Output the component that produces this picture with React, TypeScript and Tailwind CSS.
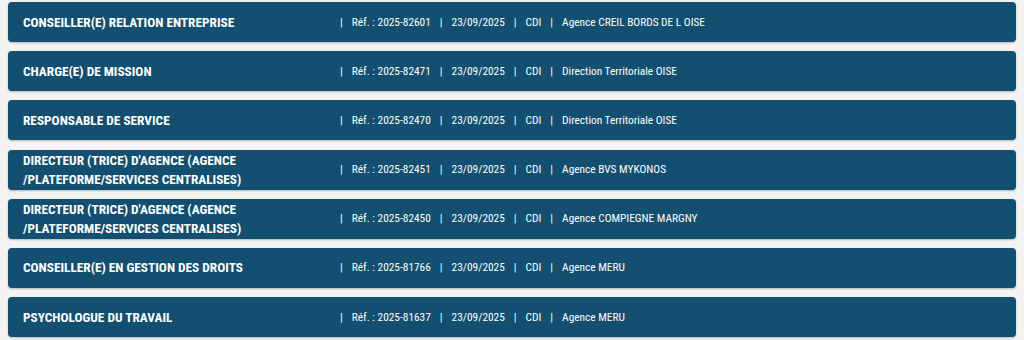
const offers = [
  { title: "CONSEILLER(E) RELATION ENTREPRISE", ref: "2025-82601", place: "Agence CREIL BORDS DE L OISE" },
  { title: "CHARGE(E) DE MISSION", ref: "2025-82471", place: "Direction Territoriale OISE" },
  { title: "RESPONSABLE DE SERVICE", ref: "2025-82470", place: "Direction Territoriale OISE" },
  { title: "DIRECTEUR (TRICE) D'AGENCE (AGENCE /PLATEFORME/SERVICES CENTRALISES)", ref: "2025-82451", place: "Agence BVS MYKONOS" },
  { title: "DIRECTEUR (TRICE) D'AGENCE (AGENCE /PLATEFORME/SERVICES CENTRALISES)", ref: "2025-82450", place: "Agence COMPIEGNE MARGNY" },
  { title: "CONSEILLER(E) EN GESTION DES DROITS", ref: "2025-81766", place: "Agence MERU" },
  { title: "PSYCHOLOGUE DU TRAVAIL", ref: "2025-81637", place: "Agence MERU" },
];

function Sep() {
  return <span className="mx-[9px]">|</span>;
}

export default function App() {
  return (
    <div
      className="min-h-[340px] bg-[#f3f3f3] px-2 pt-[2px]"
      style={{ fontFamily: '"Roboto Condensed", "Liberation Sans Narrow", Roboto, sans-serif' }}
    >
      <div className="flex flex-col gap-[9.2px]">
        {offers.map((offer) => (
          <div
            key={offer.ref}
            className="flex h-[40px] items-center rounded-[4px] bg-[#134f70] pl-[15px] text-white shadow-[0_1px_2px_rgba(0,0,0,0.25)]"
          >
            <div className="w-[317px] shrink-0 pr-4 text-[13.3px] font-bold leading-[19px]">
              {offer.title}
            </div>
            <div className="text-[11.35px] leading-[19px]">
              <span className="mr-[9px]">|</span>
              Réf. : {offer.ref}
              <Sep />
              23/09/2025
              <Sep />
              CDI
              <Sep />
              {offer.place}
            </div>
          </div>
        ))}
      </div>
    </div>
  );
}
